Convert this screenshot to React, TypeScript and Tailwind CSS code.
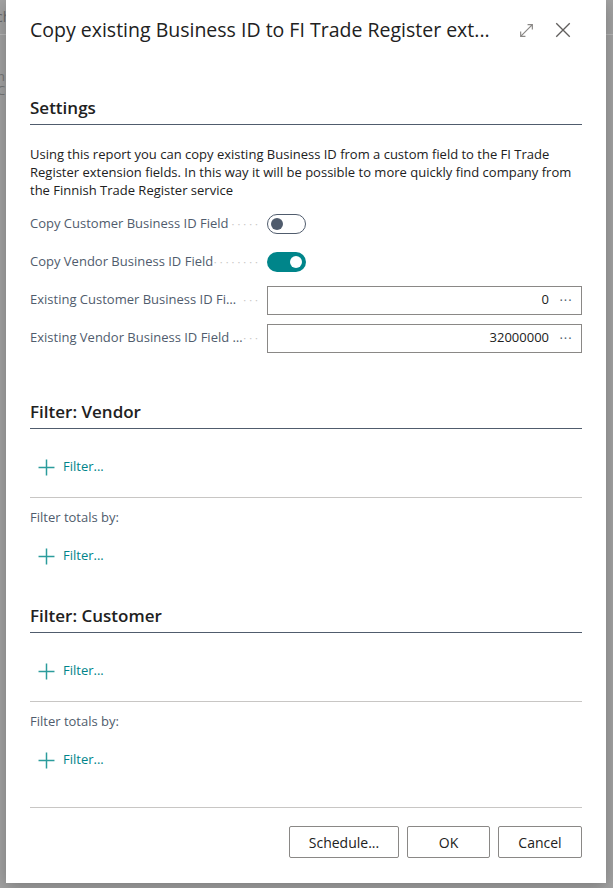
const font = "font-['Segoe_UI','Open_Sans',sans-serif]";

function Leader() {
  return (
    <span className="flex min-w-[24px] flex-1 justify-end overflow-hidden whitespace-nowrap pl-[8px] pr-[6px] text-[11px] tracking-[3px] text-[#c8c6c4]">
      ··························
    </span>
  );
}

function FieldLabel({ text }: { text: string }) {
  return (
    <div className="flex w-[237px] shrink-0 items-center">
      <span className="min-w-0 truncate text-[13px] text-[#505c6d]">{text}</span>
      <Leader />
    </div>
  );
}

function Toggle({ on }: { on: boolean }) {
  return (
    <div
      className={
        on
          ? "flex h-[20px] w-[39px] items-center justify-end rounded-full bg-[#00858a] px-[4px]"
          : "flex h-[20px] w-[39px] items-center justify-start rounded-full border border-[#505c6d] bg-white px-[3px]"
      }
    >
      <span className={on ? "h-[12px] w-[12px] rounded-full bg-white" : "h-[12px] w-[12px] rounded-full bg-[#505c6d]"} />
    </div>
  );
}

function Field({ value }: { value: string }) {
  return (
    <div className="flex h-[29px] flex-1 items-center justify-end border border-[#8a8886] bg-white">
      <span className="text-[13px] text-[#212121]">{value}</span>
      <span className="w-[32px] pl-[2px] text-center text-[13px] leading-none tracking-[1px] text-[#505c6d]">···</span>
    </div>
  );
}

function SectionTitle({ text }: { text: string }) {
  return (
    <div className="border-b border-[#505c6d] pb-[4px]">
      <h2 className="text-[17px] leading-[24px] font-semibold text-[#212121]">{text}</h2>
    </div>
  );
}

function PlusIcon() {
  return (
    <svg width="17" height="17" viewBox="0 0 16 16" fill="none" stroke="#2b9c9c" strokeWidth="1.4">
      <path d="M8 0.5v15M0.5 8h15" />
    </svg>
  );
}

function AddFilter() {
  return (
    <div className="flex h-[32px] items-center gap-[8px] pl-[8px] text-[13px] text-[#00848a]">
      <PlusIcon />
      <span>Filter...</span>
    </div>
  );
}

function FilterBlock({ title }: { title: string }) {
  return (
    <div>
      <SectionTitle text={title} />
      <div className="mt-[22px]">
        <AddFilter />
      </div>
      <div className="mt-[14px] border-t border-[#c8c6c4]" />
      <p className="mt-[10px] text-[13px] leading-[18px] text-[#505c6d]">Filter totals by:</p>
      <div className="mt-[14px]">
        <AddFilter />
      </div>
    </div>
  );
}

function Button({ label, width }: { label: string; width: string }) {
  return (
    <button className={`${width} h-[32px] rounded-[2px] border border-[#8a8886] bg-white text-[14px] text-[#212121]`}>
      {label}
    </button>
  );
}

export default function App() {
  return (
    <div className={`${font} relative h-[888px] w-[613px] overflow-hidden bg-[#a3a3a3]`}>
      {/* page behind the dialog */}
      <div className="h-[35px] border-b border-[#b8b8b8] pt-[6px] text-[14px] text-[#6b6b6b]">
        <span className="-ml-[4px]">ch</span>
      </div>
      <div className="mt-[34px] -ml-[3px] text-[13px] leading-[14px] text-[#777]">
        <div>n</div>
        <div>C</div>
      </div>

      <div className="absolute left-[6px] top-0 flex h-[883px] w-[600px] flex-col bg-white px-[24px] shadow-[0_4px_16px_rgba(0,0,0,0.25)]">
        <header className="flex h-[60px] items-center">
          <h1 className="flex-1 truncate text-[19.5px] text-[#212121]">
            Copy existing Business ID to FI Trade Register ext...
          </h1>
          <div className="flex items-center gap-[19px] pr-[10px]">
            <svg width="17" height="17" viewBox="0 0 16 16" fill="none" stroke="#8a8886" strokeWidth="1.1">
              <path d="M2.5 13.5L13.5 2.5M9 2.5h4.5V7M2.5 9v4.5H7" />
            </svg>
            <svg width="18" height="18" viewBox="0 0 16 16" fill="none" stroke="#605e5c" strokeWidth="1.2">
              <path d="M2 2l12 12M14 2L2 14" />
            </svg>
          </div>
        </header>

        <section className="mt-[36px]">
          <SectionTitle text="Settings" />
          <p className="mt-[20px] text-[13px] leading-[18px] text-[#212121]">
            Using this report you can copy existing Business ID from a custom field to the FI Trade Register extension
            fields. In this way it will be possible to more quickly find company from the Finnish Trade Register service
          </p>
          <div className="mt-[9px] flex flex-col gap-[6px]">
            <div className="flex h-[32px] items-center">
              <FieldLabel text="Copy Customer Business ID Field" />
              <Toggle on={false} />
            </div>
            <div className="flex h-[32px] items-center">
              <FieldLabel text="Copy Vendor Business ID Field" />
              <Toggle on />
            </div>
            <div className="flex h-[32px] items-center">
              <FieldLabel text="Existing Customer Business ID Field No." />
              <Field value="0" />
            </div>
            <div className="flex h-[32px] items-center">
              <FieldLabel text="Existing Vendor Business ID Field No." />
              <Field value="32000000" />
            </div>
          </div>
        </section>

        <div className="mt-[46px]">
          <FilterBlock title="Filter: Vendor" />
        </div>
        <div className="mt-[32px]">
          <FilterBlock title="Filter: Customer" />
        </div>

        <div className="mt-[31px] border-t border-[#c8c6c4]" />
        <footer className="mt-[18px] flex justify-end gap-[8px]">
          <Button label="Schedule..." width="w-[110px]" />
          <Button label="OK" width="w-[83px]" />
          <Button label="Cancel" width="w-[84px]" />
        </footer>
      </div>
    </div>
  );
}
